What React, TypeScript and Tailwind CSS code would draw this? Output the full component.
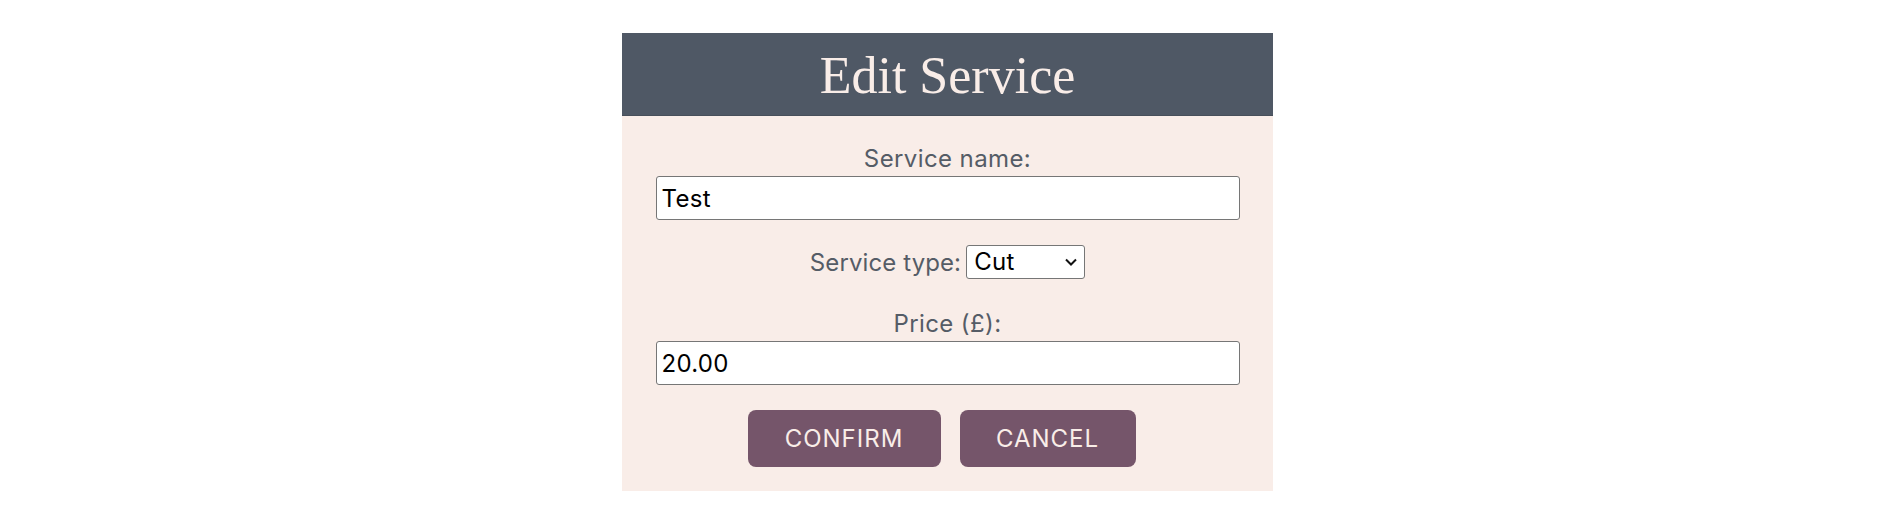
import { useState } from "react";

const sans = "font-['Inter','Open_Sans',sans-serif]";

export default function App() {
  const [name, setName] = useState("Test");
  const [type, setType] = useState("Cut");
  const [price, setPrice] = useState("20.00");

  return (
    <div className={`min-h-[511px] w-full bg-white pt-[33px] pl-[5px] ${sans}`}>
      <div className="mx-auto w-[651px] bg-[#f9ede8]">
        <div className="flex h-[83px] items-center justify-center border-b border-[#474f5a] bg-[#4f5865] pt-[2px]">
          <h1 className="font-['Liberation_Serif','Times_New_Roman',serif] text-[52px] leading-[83px] text-[#f9ede8]">
            Edit Service
          </h1>
        </div>

        <form className="flex flex-col items-center pt-[28px] pb-[24px]" onSubmit={(e) => e.preventDefault()}>
          <label htmlFor="name" className="text-[24px] leading-[29px] tracking-[0.4px] text-[#555c66]">
            Service name:
          </label>
          <input
            id="name"
            value={name}
            onChange={(e) => setName(e.target.value)}
            className="mt-[3px] h-[44px] w-[584px] rounded-[3px] border border-[#767676] bg-white px-[5px] text-[24px] tracking-[0.3px] text-black outline-none"
          />

          <div className="mt-[25px] flex h-[34px] items-center gap-[5px]">
            <label htmlFor="type" className="text-[24px] leading-[29px] tracking-[0.1px] text-[#555c66]">
              Service type:
            </label>
            <div className="relative">
              <select
                id="type"
                value={type}
                onChange={(e) => setType(e.target.value)}
                className="h-[34px] w-[119px] appearance-none rounded-[3px] border border-[#767676] bg-white pl-[7px] text-[24px] leading-[30px] tracking-[0.3px] text-black outline-none"
              >
                <option>Cut</option>
                <option>Colour</option>
                <option>Style</option>
              </select>
              <svg
                className="pointer-events-none absolute right-[8px] top-1/2 h-[12px] w-[12px] -translate-y-1/2"
                viewBox="0 0 12 12"
                fill="none"
                stroke="#111"
                strokeWidth="2"
              >
                <path d="M1 3.5 6 8.5l5-5" />
              </svg>
            </div>
          </div>

          <label htmlFor="price" className="mt-[30px] text-[24px] leading-[29px] tracking-[0.4px] text-[#555c66]">
            Price (£):
          </label>
          <input
            id="price"
            value={price}
            onChange={(e) => setPrice(e.target.value)}
            className="mt-[3px] h-[44px] w-[584px] rounded-[3px] border border-[#767676] bg-white px-[5px] text-[24px] tracking-[0.3px] text-black outline-none"
          />

          <div className="mt-[25px] flex gap-[19px] pr-[12px]">
            <button type="submit" className="h-[57px] w-[193px] rounded-[8px] bg-[#75556a] text-[24px] tracking-[1px] text-[#f9ede8]">
              CONFIRM
            </button>
            <button type="button" className="h-[57px] w-[176px] rounded-[8px] bg-[#75556a] text-[24px] tracking-[1px] text-[#f9ede8]">
              CANCEL
            </button>
          </div>
        </form>
      </div>
    </div>
  );
}
